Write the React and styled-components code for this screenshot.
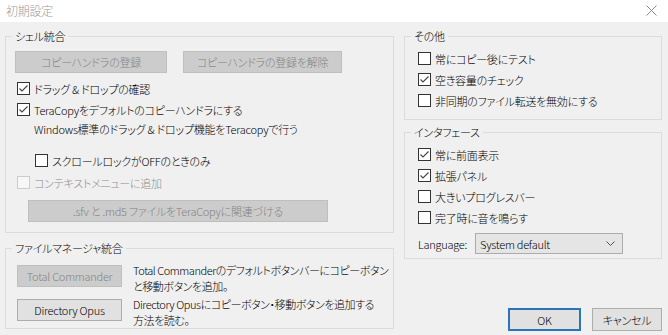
import React from "react";
import styled, { createGlobalStyle } from "styled-components";

const GlobalStyle = createGlobalStyle`
  html, body { margin: 0; padding: 0; background: #f0f0f0; }
  body {
    font-family: "Noto Sans CJK JP", "Noto Sans", sans-serif;
    font-size: 11px;
    font-weight: 300;
    letter-spacing: -0.25px;
    font-feature-settings: "palt";
    color: #000;
  }
`;

const CheckBox = ({ checked, disabled }) => (
  <Box $disabled={disabled}>
    {checked && (
      <svg width="11" height="11" viewBox="0 0 11 11">
        <path d="M1.5 5.5 L4 8 L9.5 2.5" fill="none" stroke="#444" strokeWidth="1.1" />
      </svg>
    )}
  </Box>
);

const Check = ({ label, checked, disabled, indent, top }) => (
  <CheckRow $indent={indent} $top={top} $disabled={disabled}>
    <CheckBox checked={checked} disabled={disabled} />
    <span>{label}</span>
  </CheckRow>
);

const App = () => {
  return (
    <Window>
      <GlobalStyle />
      <TitleBar>
        <span>初期設定</span>
        <svg width="11" height="11" viewBox="0 0 11 11">
          <path d="M0.5 0.5 L10.5 10.5 M10.5 0.5 L0.5 10.5" stroke="#8a8a8a" strokeWidth="1" />
        </svg>
      </TitleBar>
      <Body>
        <Column>
          <Group>
            <Legend>シェル統合</Legend>
            <Inner $pad="8px 0 10px 0">
              <ButtonRow>
                <Button disabled $w={152}>コピーハンドラの登録</Button>
                <Button disabled $w={159}>コピーハンドラの登録を解除</Button>
              </ButtonRow>
              <Check label="ドラッグ & ドロップの確認" checked indent={11} top={5} />
              <Check label="TeraCopyをデフォルトのコピーハンドラにする" checked indent={11} />
              <Note>Windows標準のドラッグ & ドロップ機能をTeracopyで行う</Note>
              <Check label="スクロールロックがOFFのときのみ" indent={29} top={14} />
              <Check label="コンテキストメニューに追加" disabled indent={11} top={1} />
              <WideButton disabled $w={300}>
                .sfv と .md5 ファイルをTeraCopyに関連づける
              </WideButton>
            </Inner>
          </Group>
          <Group>
            <Legend>ファイルマネージャ統合</Legend>
            <Inner $pad="10px 0 2px 11px">
              <FmRow>
                <Button disabled $w={105}>Total Commander</Button>
                <Desc>
                  <DescLine>Total Commanderのデフォルトボタンバーにコピーボタン</DescLine>
                  <DescLine>と移動ボタンを追加。</DescLine>
                </Desc>
              </FmRow>
              <FmRow $top={7}>
                <Button $w={105}>Directory Opus</Button>
                <Desc>
                  <DescLine>Directory Opusにコピーボタン・移動ボタンを追加する</DescLine>
                  <DescLine>方法を読む。</DescLine>
                </Desc>
              </FmRow>
            </Inner>
          </Group>
        </Column>
        <Column $gap={5}>
          <Group>
            <Legend>その他</Legend>
            <Inner $pad="5px 0 8px 0">
              <Check label="常にコピー後にテスト" indent={13} />
              <Check label="空き容量のチェック" checked indent={13} />
              <Check label="非同期のファイル転送を無効にする" indent={13} />
            </Inner>
          </Group>
          <Group>
            <Legend>インタフェース</Legend>
            <Inner $pad="5px 0 4px 0">
              <Check label="常に前面表示" checked indent={13} />
              <Check label="拡張パネル" checked indent={13} />
              <Check label="大きいプログレスバー" indent={13} />
              <Check label="完了時に音を鳴らす" indent={13} />
              <LangRow>
                <LangLabel>Language:</LangLabel>
                <Select>
                  <span>System default</span>
                  <svg width="9" height="5" viewBox="0 0 9 5">
                    <path d="M0.5 0.5 L4.5 4.5 L8.5 0.5" fill="none" stroke="#555" strokeWidth="1" />
                  </svg>
                </Select>
              </LangRow>
            </Inner>
          </Group>
          <Footer>
            <Button $w={73} $h={23} $primary>OK</Button>
            <Button $w={70} $h={23}>キャンセル</Button>
          </Footer>
        </Column>
      </Body>
    </Window>
  );
};

const Window = styled.div`
  width: 668px;
  height: 335px;
  display: flex;
  flex-direction: column;
  background: #f0f0f0;
  overflow: hidden;
`;

const TitleBar = styled.div`
  height: 22px;
  flex: none;
  background: #fff;
  display: flex;
  align-items: center;
  justify-content: space-between;
  padding: 0 11px 2px 6px;
  box-sizing: border-box;
  color: #999;
  font-size: 12px;
`;

const Body = styled.div`
  flex: 1;
  display: grid;
  grid-template-columns: 389px 258px;
  column-gap: 10px;
  padding: 7px 0 4px 5px;
`;

const Column = styled.div`
  display: flex;
  flex-direction: column;
  gap: ${(p) => p.$gap ?? 8}px;
`;

const Group = styled.fieldset`
  margin: 0;
  padding: 0;
  border: 1px solid #dcdcdc;
  min-width: 0;
`;

const Legend = styled.legend`
  margin-left: 6px;
  padding: 0 3px;
  line-height: 14px;
  height: 14px;
`;

const Inner = styled.div`
  display: flex;
  flex-direction: column;
  align-items: flex-start;
  padding: ${(p) => p.$pad};
`;

const ButtonRow = styled.div`
  display: flex;
  gap: 16px;
  margin-left: 9px;
`;

const Button = styled.button`
  width: ${(p) => p.$w}px;
  height: ${(p) => p.$h ?? 22}px;
  box-sizing: border-box;
  padding: 0;
  font: inherit;
  letter-spacing: inherit;
  line-height: 14px;
  background: ${(p) => (p.disabled ? "#cccccc" : "#e1e1e1")};
  color: ${(p) => (p.disabled ? "#838383" : "#000")};
  border: ${(p) => (p.$primary ? "2px solid #2b74b8" : p.disabled ? "1px solid #bfbfbf" : "1px solid #adadad")};
  flex: none;
`;

const WideButton = styled(Button)`
  margin-top: 7px;
  margin-left: 22px;
`;

const CheckRow = styled.div`
  display: flex;
  align-items: center;
  gap: 4px;
  height: 21px;
  margin-left: ${(p) => p.$indent}px;
  margin-top: ${(p) => p.$top ?? 0}px;
  color: ${(p) => (p.$disabled ? "#8c8c8c" : "#000")};
  white-space: nowrap;
`;

const Box = styled.span`
  width: 13px;
  height: 13px;
  box-sizing: border-box;
  border: 1px solid ${(p) => (p.$disabled ? "#cccccc" : "#333")};
  background: ${(p) => (p.$disabled ? "#f7f7f7" : "#fff")};
  display: flex;
  align-items: center;
  justify-content: center;
  flex: none;
`;

const Note = styled.div`
  margin: 2px 0 0 28px;
  line-height: 14px;
  white-space: nowrap;
`;

const FmRow = styled.div`
  display: flex;
  align-items: flex-start;
  gap: 11px;
  margin-top: ${(p) => p.$top ?? 0}px;
  height: 27px;
`;

const Desc = styled.div`
  display: flex;
  flex-direction: column;
  margin-top: -3px;
  letter-spacing: -0.45px;
`;

const DescLine = styled.div`
  height: 16px;
  line-height: 16px;
  white-space: nowrap;
`;

const LangRow = styled.div`
  display: flex;
  align-items: center;
  margin: 5px 0 0 13px;
`;

const LangLabel = styled.span`
  width: 57px;
`;

const Select = styled.div`
  width: 148px;
  height: 21px;
  box-sizing: border-box;
  background: #e5e5e5;
  border: 1px solid #acacac;
  display: flex;
  align-items: center;
  justify-content: space-between;
  padding: 0 7px 0 4px;
`;

const Footer = styled.div`
  margin-top: auto;
  display: flex;
  justify-content: flex-end;
  gap: 11px;
`;

export default App;
